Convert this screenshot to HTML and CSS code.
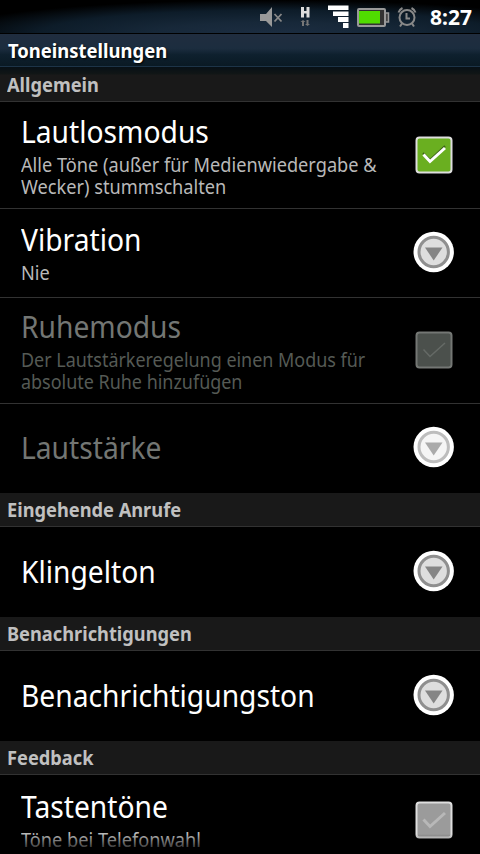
FILE: index.html
```html
<!DOCTYPE html>
<html lang="de">
<head>
<meta charset="utf-8">
<title>Toneinstellungen</title>
<link rel="stylesheet" href="styles.css">
</head>
<body>
<svg width="0" height="0" class="defs">
  <symbol id="more" viewBox="0 0 42 42">
    <circle cx="20.700" cy="21" r="20.2" fill="#fff"/>
    <circle class="ring" cx="20.700" cy="21" r="14.7" stroke-width="3"/>
    <path class="tri" d="M12 16.500h17.500L20.700 29.500z"/>
  </symbol>
  <symbol id="check" viewBox="0 0 38 38">
    <rect class="box" x="1.5" y="1.5" width="35" height="35" rx="3" stroke-width="2"/>
    <path class="shade" d="M8 17l7 7 15-14" fill="none" stroke-width="2"/>
    <path class="tick" d="M8.5 18.500l6.500 7L30 12" fill="none"/>
  </symbol>
</svg>
<header class="status">
  <svg class="status-icons" width="180" height="33" viewBox="0 0 180 33">
    <path d="M0 14h6l6-7v20l-6-6H0z" fill="#999"/>
    <path d="M14.500 14l7 7.500m0-7.500l-7 7.500" stroke="#888" stroke-width="1.800"/>
    <path d="M41 7h3v4h2.500V7h3v10.500h-3v-4H44v4h-3z" fill="#ddd"/>
    <path d="M42 26v-4h-1.500l2.500-2 2.500 2H44v4zm4.500-6v4H45l2.500 2 2.500-2h-1.500v-4z" fill="#777"/>
    <path d="M68 5.500h20.500v4.500H68zM73 11.500h15.500v4.500H73zM78 17h10.500v5H78zM83 23h5.500v5H83z" fill="#fff"/>
    <rect x="98" y="9" width="27" height="17" rx="1" fill="#333" stroke="#999" stroke-width="2"/>
    <path d="M126 13h2.500v9H126" fill="#444" stroke="#999" stroke-width="1.500"/>
    <path d="M99 11h21v12.500H99z" fill="#50dc00"/>
    <g fill="none" stroke="#898989" stroke-width="2">
      <circle cx="147" cy="17.500" r="7.500"/>
      <path d="M138.500 12.500q1-3 4-4.500M155.500 12.500q-1-3-4-4.500M142 23.500l-2 3M152 23.500l2 3M146.500 13v5.500h3.500"/>
    </g>
  </svg>
  <span class="clock">8:27</span>
</header>
<h1 class="titlebar"><span>Toneinstellungen</span></h1>
<main>
  <h2 class="section first"><span>Allgemein</span></h2>
  <div class="row tall line">
    <div class="text"><p class="name">Lautlosmodus</p><p class="sub">Alle Töne (außer für Medienwiedergabe &amp;<br>Wecker) stummschalten</p></div>
    <svg class="check on"><use href="#check"/></svg>
  </div>
  <div class="row line lifted">
    <div class="text"><p class="name">Vibration</p><p class="sub">Nie</p></div>
    <svg class="more"><use href="#more"/></svg>
  </div>
  <div class="row mid line disabled">
    <div class="text"><p class="name">Ruhemodus</p><p class="sub">Der Lautstärkeregelung einen Modus für<br>absolute Ruhe hinzufügen</p></div>
    <svg class="check dim"><use href="#check"/></svg>
  </div>
  <div class="row disabled volume">
    <div class="text"><p class="name">Lautstärke</p></div>
    <svg class="more pale"><use href="#more"/></svg>
  </div>
  <h2 class="section"><span>Eingehende Anrufe</span></h2>
  <div class="row single lifted">
    <div class="text"><p class="name">Klingelton</p></div>
    <svg class="more"><use href="#more"/></svg>
  </div>
  <h2 class="section"><span>Benachrichtigungen</span></h2>
  <div class="row single lifted">
    <div class="text"><p class="name">Benachrichtigungston</p></div>
    <svg class="more"><use href="#more"/></svg>
  </div>
  <h2 class="section"><span>Feedback</span></h2>
  <div class="row">
    <div class="text"><p class="name">Tastentöne</p><p class="sub">Töne bei Telefonwahl</p></div>
    <svg class="check off"><use href="#check"/></svg>
  </div>
</main>
<div class="fade"></div>
</body>
</html>
```
FILE: styles.css
```css
* { box-sizing: border-box; margin: 0; padding: 0; }
body { width: 480px; height: 854px; overflow: hidden; position: relative; background: #000; color: #fff; font-family: "Noto Sans", "Open Sans", sans-serif; }
.defs { position: absolute; }
.status { height: 33px; display: flex; justify-content: flex-end; background: radial-gradient(ellipse 330px 34px at 270px 34px, #1c2d41 0%, #172839 35%, #0d1c29 70%, #000 100%); }
.status-icons { flex: none; margin-right: -10px; }
.clock { width: 50px; font-size: 21px; font-weight: 700; line-height: 34px; }
.titlebar { height: 34px; border-top: 1px solid #000; border-bottom: 1px solid #1d3448; background: linear-gradient(#202d3f, #1c2d3f 45%, #0e202e 65%, #0a1a24); padding-left: 8px; font-size: 19.500px; line-height: 33px; }
.titlebar span, .section span { display: inline-block; transform: scaleX(.935); transform-origin: 0 0; white-space: nowrap; }
.titlebar span { text-shadow: 1px 1px 2px #000; transform: scaleX(.945); }
.section { height: 34px; border-bottom: 1px solid #323232; background: #191919; color: #c0c0c0; padding-left: 7px; font-size: 19.500px; line-height: 34px; }
.first { height: 35px; background: linear-gradient(#071016, #111616 7px, #191919 8px); line-height: 36px; }
.row { height: 89px; display: flex; align-items: center; justify-content: space-between; padding: 0 25px 0 21px; }
.line { border-bottom: 1px solid #323232; }
.tall { height: 107px; }
.mid { height: 106px; }
.single { height: 90px; }
.lifted { padding-bottom: 2px; }
.volume { padding-bottom: 4px; }
.text { width: 360px; }
.name, .sub { transform-origin: 0 0; white-space: nowrap; }
.name { font-size: 31px; line-height: 34px; transform: scaleX(.91); }
.sub { margin: 6px 0 -1px; font-size: 20px; line-height: 22px; color: #b9b9b9; transform: scaleX(.909); }
.mid .sub { transform: scaleX(.897); }
.disabled .name { color: #737673; }
.disabled .sub { color: #555a55; }
.more { width: 42px; height: 42px; flex: none; }
.check { width: 38px; height: 38px; flex: none; margin-right: 2px; }
.more { --disc: #dedede; --ring: #8f8f8f; --tri: #858585; }
.pale { --disc: #f5f5f5; --ring: #bdbdbd; --tri: #aaa; }
.ring { fill: var(--disc); stroke: var(--ring); }
.tri { fill: var(--tri); }
.on { --box: #6aaf20; --edge: #dedede; --tick: #fff; --shade: #3f641b; --weight: 3; }
.dim { --box: #4b504c; --edge: #747774; --tick: #656a66; --shade: transparent; --weight: 1.5; margin-bottom: 2px; }
.off { --box: #9b9b9b; --edge: #dedede; --tick: #b8b8b8; --shade: transparent; --weight: 3; }
.box { fill: var(--box); stroke: var(--edge); }
.tick { stroke: var(--tick); stroke-width: var(--weight); }
.shade { stroke: var(--shade); }
.fade { position: absolute; left: 0; bottom: 0; width: 480px; height: 20px; background: linear-gradient(transparent, #000); }
```
